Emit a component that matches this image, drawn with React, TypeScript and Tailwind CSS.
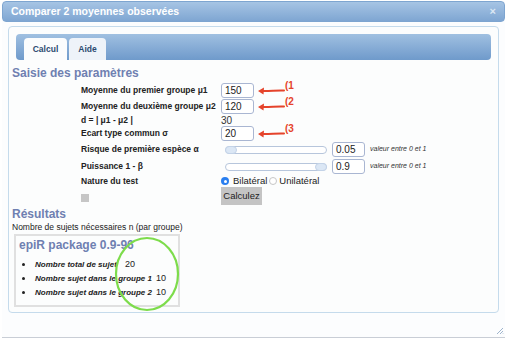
import React from 'react';

// flèche rouge d'annotation
const Arrow = ({ n }: { n: number }) => (
  <span className="flex items-start ml-[3px]">
    <svg width="28" height="10" viewBox="0 0 28 10" className="mt-[1px]">
      <path d="M27 4.5 C20 4, 12 5.5, 4 5" stroke="#e5432b" strokeWidth="2" fill="none" strokeLinecap="round" />
      <path d="M1 5 L7 1.5 L6.5 8.5 Z" fill="#e5432b" />
    </svg>
    <span className="text-[10px] font-bold text-[#e5432b] leading-none -mt-[4px]">({n}</span>
  </span>
);

const NumInput = ({ value }: { value: string }) => (
  <div className="w-[33px] h-[15px] border border-[#a9b6d2] rounded-[3px] bg-white text-[10px] leading-[13px] pl-[3px] text-[#222]">
    {value}
  </div>
);

const Slider = ({ right }: { right?: boolean }) => (
  <div className="relative w-[102px] h-[8px] rounded-full border border-[#b7c6dc] bg-white ml-[4px]">
    <div
      className={`absolute -top-[1px] w-[12px] h-[8px] rounded-full bg-[#dbe7f5] border border-[#c3d3e8] ${right ? 'right-[-1px]' : 'left-[-1px]'}`}
    />
  </div>
);

const Row = ({ label, children, h = 'h-[15px]' }: { label: string; children?: React.ReactNode; h?: string }) => (
  <div className={`flex items-center ${h}`}>
    <div className="w-[140px] shrink-0 font-bold text-[8.5px] text-[#222] whitespace-nowrap">{label}</div>
    <div className="flex items-center">{children}</div>
  </div>
);

const Hint = () => <span className="ml-[5px] text-[7px] italic text-[#333] whitespace-nowrap">valeur entre 0 et 1</span>;

const results = [
  { label: 'Nombre total de sujet', value: '20', w: 'w-[86px]' },
  { label: 'Nombre sujet dans le groupe 1', value: '10', w: '' },
  { label: 'Nombre sujet dans le groupe 2', value: '10', w: '' },
];

export default function App() {
  return (
    <div className="relative w-[507px] h-[341px] bg-white overflow-hidden font-['Liberation_Sans',Arial,sans-serif]">
      <div className="mx-[2px] mt-[1px] h-[337px] border-b border-[#c9ced6] bg-[#fcfdfe] relative">
        {/* barre de titre */}
        <div className="h-[21px] rounded-[4px] border border-[#7ea5d0] bg-gradient-to-b from-[#a6c4e4] to-[#7fa6d2] flex items-center justify-between px-[8px]">
          <span className="text-white font-bold text-[10.5px]">Comparer 2 moyennes observées</span>
          <span className="text-[#dce8f4] font-bold text-[11px] leading-none">×</span>
        </div>

        <div className="px-[6px] pt-[4px]">
          <div className="relative h-[287px] border border-[#c5dbec] rounded-[4px] bg-[#fcfdfd] px-[3px] pt-[7px]">
            {/* onglets */}
            <div className="ml-[4px] mr-[4px] h-[26px] rounded-[4px] bg-gradient-to-b from-[#a0c0e1] to-[#6f9acb] flex items-end pl-[8px] gap-[2px]">
              <div className="w-[43px] h-[22px] rounded-t-[4px] bg-[#fbfcfd] flex items-center justify-center text-[8.5px] font-bold text-[#2b4a70]">Calcul</div>
              <div className="w-[37px] h-[22px] rounded-t-[4px] bg-[#eef3f9] flex items-center justify-center text-[8.5px] font-bold text-[#2b4a70]">Aide</div>
            </div>

            <div className="mt-[5px] text-[12px] font-bold text-[#6f80b1] leading-[16px]">Saisie des paramètres</div>

            <div className="pl-[69px] mt-[2px] flex flex-col">
              <Row label="Moyenne du premier groupe μ1">
                <NumInput value="150" />
                <Arrow n={1} />
              </Row>
              <Row label="Moyenne du deuxième groupe μ2" h="h-[16px]">
                <NumInput value="120" />
                <Arrow n={2} />
              </Row>
              <Row label="d = | μ1 - μ2 |" h="h-[12px]">
                <span className="text-[10px] text-[#333]">30</span>
              </Row>
              <Row label="Ecart type commun σ" h="h-[15px]">
                <NumInput value="20" />
                <Arrow n={3} />
              </Row>
              <Row label="Risque de première espèce α" h="h-[17px]">
                <Slider />
                <div className="ml-[5px]"><NumInput value="0.05" /></div>
                <Hint />
              </Row>
              <Row label="Puissance 1 - β" h="h-[17px]">
                <Slider right />
                <div className="ml-[5px]"><NumInput value="0.9" /></div>
                <Hint />
              </Row>
              <Row label="Nature du test" h="h-[12px]">
                <span className="w-[8px] h-[8px] rounded-full bg-[#2a7ff0] flex items-center justify-center">
                  <span className="w-[3px] h-[3px] rounded-full bg-white" />
                </span>
                <span className="ml-[4px] text-[9.5px] text-[#222]">Bilatéral</span>
                <span className="ml-[2px] w-[8px] h-[8px] rounded-full border border-[#c6c6c6] bg-white" />
                <span className="ml-[2px] text-[9.5px] text-[#222]">Unilatéral</span>
              </Row>
              <div className="flex items-start h-[19px]">
                <div className="w-[140px]">
                  <div className="w-[8px] h-[8px] bg-[#c6c6c6] mt-[7px]" />
                </div>
                <div className="w-[41px] h-[18px] bg-[#c4c4c4] flex items-center justify-center text-[9.5px] text-[#222]">Calculez</div>
              </div>
            </div>

            <div className="text-[12px] font-bold text-[#6f80b1] leading-[16px]">Résultats</div>
            <div className="text-[8.5px] text-[#222] leading-[11px]">Nombre de sujets nécessaires n (par groupe)</div>

            <div className="relative ml-[2px] mt-[1px] w-[166px] h-[73px] border-2 border-[#e0e0e0] px-[3px] pt-[1px]">
              <div className="text-[12px] font-bold text-[#6f80b1] leading-[16px]">epiR package 0.9-96</div>
              <ul className="mt-[5px] flex flex-col gap-[1px] text-[8px]">
                {results.map((r) => (
                  <li key={r.label} className="flex items-center h-[13px]">
                    <span className="w-[3px] h-[3px] rounded-full bg-[#222] ml-[3px] mr-[10px] shrink-0" />
                    <span className={`${r.w} shrink-0 italic font-bold text-[#222] whitespace-nowrap`}>{r.label}</span>
                    <span className="ml-[4px] text-[9px] text-[#222]">{r.value}</span>
                  </li>
                ))}
              </ul>
            </div>

            {/* cercle vert d'annotation */}
            <svg className="absolute left-[104px] top-[208px]" width="68" height="78" viewBox="0 0 68 78">
              <ellipse cx="34" cy="39" rx="31" ry="36" fill="none" stroke="#7ddc4b" strokeWidth="2.2" />
            </svg>
          </div>
        </div>

        {/* poignée de redimensionnement */}
        <svg className="absolute right-[1px] bottom-[2px]" width="8" height="8" viewBox="0 0 8 8">
          <path d="M7 1 L1 7 M7 4 L4 7 M7 6.5 L6.5 7" stroke="#9fb4cc" strokeWidth="1" />
        </svg>
      </div>
    </div>
  );
}
